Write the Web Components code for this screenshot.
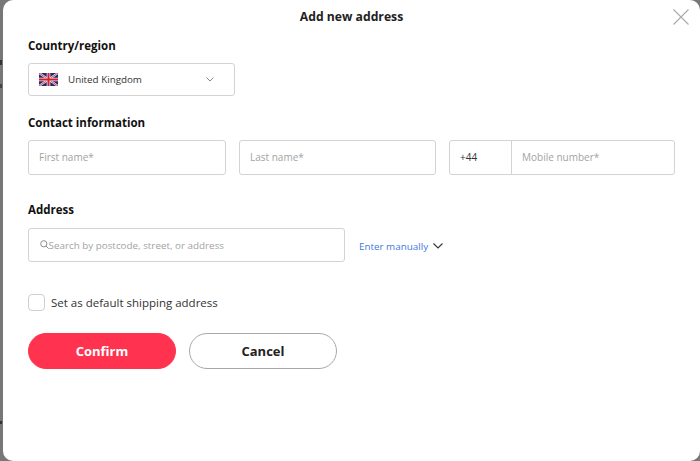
<!DOCTYPE html>
<html>
<head>
<meta charset="utf-8">
<title>Add new address</title>
<style>
  html, body { margin: 0; height: 100%; overflow: hidden; }
  body {
    /* bits of the page behind the overlay */
    background:
      linear-gradient(#333, #333) 0 60px / 2px 5px no-repeat,
      linear-gradient(#444, #444) 0 84px / 2px 4px no-repeat,
      linear-gradient(#333, #333) 0 421px / 2px 3px no-repeat,
      #777;
    font-family: "Open Sans", "Liberation Sans", sans-serif;
  }
</style>
</head>
<body>
<address-modal heading="Add new address">
  <form-section label="Country/region" style="--gap:9px; --after:18px">
    <country-select name="United Kingdom"></country-select>
  </form-section>
  <form-section label="Contact information" style="--gap:9px; --after:26px">
    <div style="display:flex; gap:13px">
      <text-field placeholder="First name*" style="width:198px"></text-field>
      <text-field placeholder="Last name*" style="width:197px"></text-field>
      <phone-field code="+44" placeholder="Mobile number*"></phone-field>
    </div>
  </form-section>
  <form-section label="Address" style="--gap:10px; --after:32px">
    <address-search placeholder="Search by postcode, street, or address"></address-search>
  </form-section>
  <check-row>Set as default shipping address</check-row>
  <div style="display:flex; gap:13px; margin-top:22px">
    <pill-button primary>Confirm</pill-button>
    <pill-button>Cancel</pill-button>
  </div>
</address-modal>

<script>
class AddressModal extends HTMLElement {
    constructor() {
        super();
        this.shadow = this.attachShadow({ mode: "open" });
        this.shadow.innerHTML = /*html*/ `
            <style>
                :host {
                    display: block;
                    box-sizing: border-box;
                    width: 697.5px;
                    height: 461px;
                    margin-left: 2.5px;
                    padding: 0 25px 0 25.5px;
                    background: #fff;
                    border-radius: 10px;
                    position: relative;
                    color: #111;
                }
                h1 {
                    margin: 0;
                    height: 37px;
                    padding-top: 8px;
                    box-sizing: border-box;
                    font-size: 12.2px;
                    line-height: 18px;
                    font-weight: 700;
                    text-align: center;
                    color: #222;
                }
                #close {
                    position: absolute;
                    top: 9px;
                    right: 11px;
                    width: 16px;
                    height: 16px;
                }
            </style>
            <h1></h1>
            <svg id="close" viewBox="0 0 16 16" fill="none" stroke="#a9a9a9" stroke-width="1.1">
                <path d="M.5.500l15 15M15.500.500l-15 15"/>
            </svg>
            <slot></slot>
        `;
        this.shadow.querySelector("h1").textContent = this.getAttribute("heading");
    }
}
customElements.define("address-modal", AddressModal);

class FormSection extends HTMLElement {
    constructor() {
        super();
        this.shadow = this.attachShadow({ mode: "open" });
        this.shadow.innerHTML = /*html*/ `
            <style>
                :host { display: block; margin-bottom: var(--after, 18px); }
                div {
                    font-size: 11.5px;
                    line-height: 17px;
                    font-weight: 700;
                    color: #111;
                    margin-bottom: var(--gap, 9px);
                }
            </style>
            <div></div>
            <slot></slot>
        `;
        this.shadow.querySelector("div").textContent = this.getAttribute("label");
    }
}
customElements.define("form-section", FormSection);

class CountrySelect extends HTMLElement {
    constructor() {
        super();
        this.shadow = this.attachShadow({ mode: "open" });
        this.shadow.innerHTML = /*html*/ `
            <style>
                :host {
                    display: flex;
                    align-items: center;
                    box-sizing: border-box;
                    width: 207px;
                    height: 33px;
                    padding: 0 20px 0 10px;
                    border: 1px solid #d3d3d3;
                    border-radius: 3px;
                    font-size: 9.8px;
                    color: #333;
                }
                #flag { width: 19px; height: 13px; margin-right: 10px; }
                span { flex: 1; padding-bottom: 1px; }
                #arrow { width: 8px; height: 5px; }
            </style>
            <svg id="flag" viewBox="0 0 19 13">
                <rect width="19" height="13" fill="#1f2a6b"/>
                <path d="M0 0l19 13M19 0L0 13" stroke="#e6dfe8" stroke-width="2.2"/>
                <path d="M0 0l19 13M19 0L0 13" stroke="#c8283c" stroke-width=".8"/>
                <path d="M9.500 0v13M0 6.500h19" stroke="#efe6ea" stroke-width="3.600"/>
                <path d="M9.500 0v13M0 6.500h19" stroke="#d0202f" stroke-width="2"/>
            </svg>
            <span></span>
            <svg id="arrow" viewBox="0 0 8 5" fill="none" stroke="#888" stroke-width="1">
                <path d="M.5.500l3.500 3.500 3.500-3.500"/>
            </svg>
        `;
        this.shadow.querySelector("span").textContent = this.getAttribute("name");
    }
}
customElements.define("country-select", CountrySelect);

class TextField extends HTMLElement {
    constructor() {
        super();
        this.shadow = this.attachShadow({ mode: "open" });
        this.shadow.innerHTML = /*html*/ `
            <style>
                :host {
                    display: flex;
                    align-items: center;
                    box-sizing: border-box;
                    height: 35px;
                    padding: 0 10px 1px;
                    border: 1px solid #d3d3d3;
                    border-radius: 3px;
                    font-size: 10px;
                    color: #a3a3a3;
                }
            </style>
            <span></span>
        `;
        this.shadow.querySelector("span").textContent = this.getAttribute("placeholder");
    }
}
customElements.define("text-field", TextField);

class PhoneField extends HTMLElement {
    constructor() {
        super();
        this.shadow = this.attachShadow({ mode: "open" });
        this.shadow.innerHTML = /*html*/ `
            <style>
                :host {
                    display: flex;
                    box-sizing: border-box;
                    width: 226px;
                    height: 35px;
                    border: 1px solid #d3d3d3;
                    border-radius: 3px;
                    font-size: 10px;
                    line-height: 32px;
                }
                #code {
                    width: 62px;
                    box-sizing: border-box;
                    padding-left: 10px;
                    border-right: 1px solid #d3d3d3;
                    color: #333;
                }
                #hint { padding-left: 10px; color: #a3a3a3; }
            </style>
            <span id="code"></span>
            <span id="hint"></span>
        `;
        this.shadow.querySelector("#code").textContent = this.getAttribute("code");
        this.shadow.querySelector("#hint").textContent = this.getAttribute("placeholder");
    }
}
customElements.define("phone-field", PhoneField);

class AddressSearch extends HTMLElement {
    constructor() {
        super();
        this.shadow = this.attachShadow({ mode: "open" });
        this.shadow.innerHTML = /*html*/ `
            <style>
                :host { display: flex; align-items: center; }
                #box {
                    display: flex;
                    align-items: center;
                    box-sizing: border-box;
                    width: 317px;
                    height: 34px;
                    padding: 0 0 1px 10.5px;
                    border: 1px solid #d3d3d3;
                    border-radius: 3px;
                    font-size: 9.85px;
                    color: #a3a3a3;
                }
                #glass { width: 9px; height: 9px; flex: none; }
                #manual {
                    display: flex;
                    align-items: center;
                    margin: 2px 0 0 14px;
                    font-size: 9.85px;
                    color: #3f78e0;
                }
                #chev { width: 10px; height: 6px; margin-left: 5px; }
            </style>
            <div id="box">
                <svg id="glass" viewBox="0 0 9 9" fill="none" stroke="#8d8d8d" stroke-width="1">
                    <circle cx="3.800" cy="3.800" r="3.100"/>
                    <path d="M6 6l2.600 2.600"/>
                </svg>
                <span></span>
            </div>
            <div id="manual">
                Enter manually
                <svg id="chev" viewBox="0 0 10 6" fill="none" stroke="#333" stroke-width="1.100">
                    <path d="M.5.500l4.500 4.500 4.500-4.500"/>
                </svg>
            </div>
        `;
        this.shadow.querySelector("#box span").textContent = this.getAttribute("placeholder");
    }
}
customElements.define("address-search", AddressSearch);

class CheckRow extends HTMLElement {
    constructor() {
        super();
        this.shadow = this.attachShadow({ mode: "open" });
        this.shadow.innerHTML = /*html*/ `
            <style>
                :host {
                    display: flex;
                    align-items: center;
                    gap: 6px;
                    font-size: 11.5px;
                    line-height: 17px;
                    color: #333;
                }
                i {
                    display: block;
                    box-sizing: border-box;
                    width: 17px;
                    height: 17px;
                    border: 1px solid #cfcfcf;
                    border-radius: 4px;
                }
            </style>
            <i></i>
            <slot></slot>
        `;
    }
}
customElements.define("check-row", CheckRow);

class PillButton extends HTMLElement {
    constructor() {
        super();
        this.shadow = this.attachShadow({ mode: "open" });
        this.shadow.innerHTML = /*html*/ `
            <style>
                :host {
                    display: flex;
                    align-items: center;
                    justify-content: center;
                    box-sizing: border-box;
                    width: 148px;
                    height: 36px;
                    border: 1px solid #a8a8a8;
                    border-radius: 18px;
                    font-size: 13px;
                    font-weight: 700;
                    color: #222;
                }
                :host([primary]) {
                    background: #ff334f;
                    border-color: #ff334f;
                    color: #fff;
                }
            </style>
            <slot></slot>
        `;
    }
}
customElements.define("pill-button", PillButton);
</script>
</body>
</html>
